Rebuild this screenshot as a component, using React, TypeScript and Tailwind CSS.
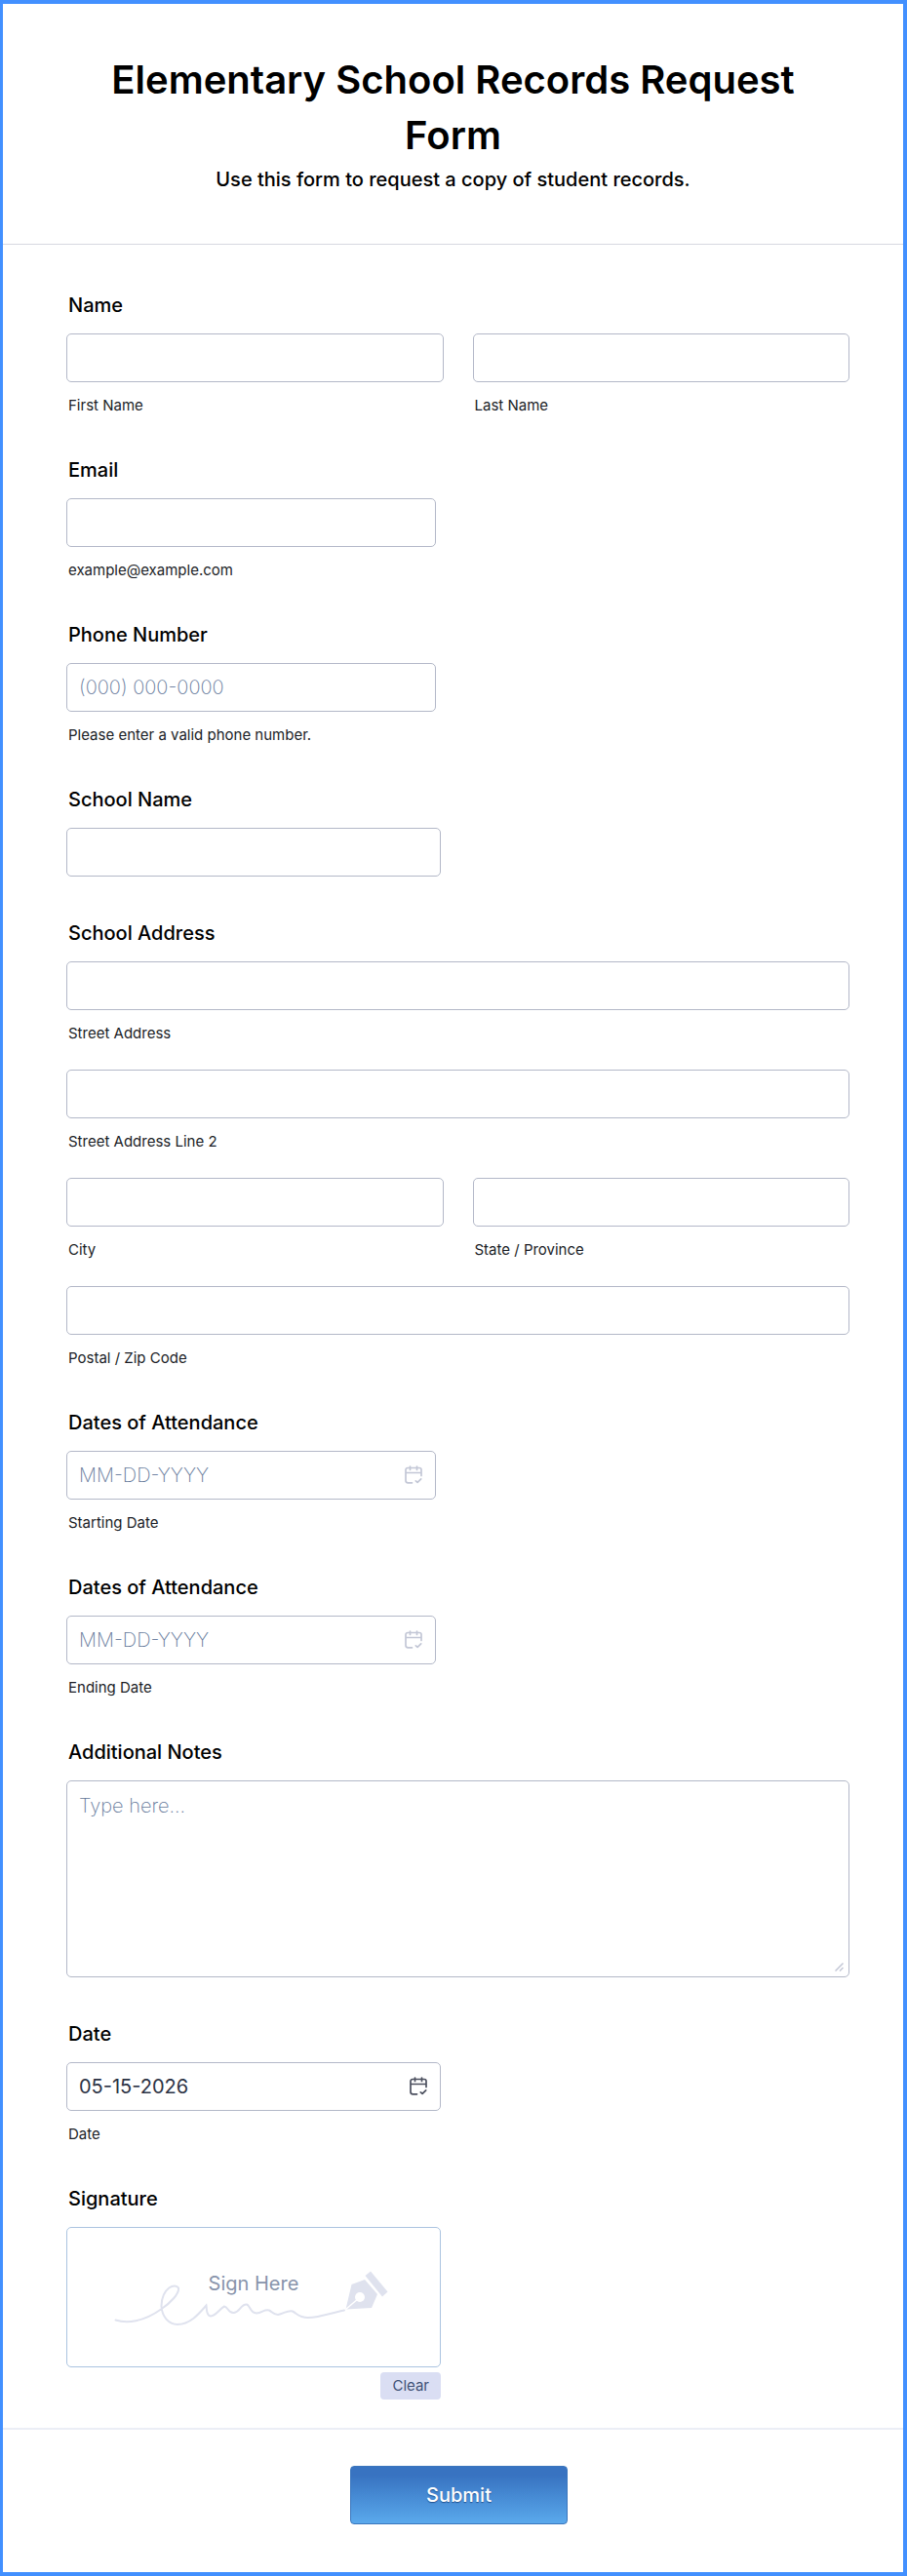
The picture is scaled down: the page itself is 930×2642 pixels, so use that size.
import type { ReactNode } from "react";

type fieldProps = {
  id: string;
  label: string;
  type?: string;
  placeholder?: string;
  sublabel?: string;
  width?: string;
}

const inputStyle = "block h-[50px] w-full rounded-[5px] border border-[#b3b8c8] bg-white px-3 text-xl text-[#2c3345] placeholder:font-extralight placeholder:text-[#64789a]";

function Title({ id, children }: { id?: string; children: ReactNode }) {
  return (
    <label htmlFor={id} className="mb-4 ml-0.5 block text-xl leading-[26px] font-medium">{children}</label>
  )
}

function Sublabel({ id, children }: { id: string; children: ReactNode }) {
  return (
    <label htmlFor={id} className="mt-[15px] ml-0.5 block text-[15px] leading-[17px] text-[#1a1d26]">{children}</label>
  )
}

function SubField({ id, sublabel }: { id: string; sublabel: string }) {
  return (
    <div className="flex-1">
      <input id={id} name={id} type="text" className={inputStyle} />
      <Sublabel id={id}>{sublabel}</Sublabel>
    </div>
  )
}

function Field({ id, label, type = "text", placeholder, sublabel, width = "w-[379px]" }: fieldProps) {
  return (
    <div className={width}>
      <Title id={id}>{label}</Title>
      <input id={id} name={id} type={type} placeholder={placeholder} className={inputStyle} />
      {sublabel && <Sublabel id={id}>{sublabel}</Sublabel>}
    </div>
  )
}

function CalendarIcon() {
  return (
    <svg viewBox="0 0 18 19" width="18" height="19" fill="none" stroke="currentColor" strokeWidth="1.7" strokeLinecap="round" strokeLinejoin="round">
      <path d="M5.5 1v3.5M12.5 1v3.5M1 7.5h16M17 10.5V4.500a2 2 0 0 0-2-2H3a2 2 0 0 0-2 2V15.500a2.300 2.300 0 0 0 2.300 2.300H7.500M11.300 15.800l1.800 1.600 3.600-3.600" />
    </svg>
  )
}

function DateField({ id, label, sublabel, value, width = "w-[379px]" }: { id: string; label: string; sublabel: string; value?: string; width?: string }) {
  return (
    <div className={width}>
      <Title id={id}>{label}</Title>
      <div className="relative">
        <input id={id} name={id} type="text" placeholder="MM-DD-YYYY" defaultValue={value} className={inputStyle} />
        <button type="button" aria-label="Choose date" className={`absolute top-[15px] right-3.5 ${value ? "text-[#4b4f5e]" : "text-[#c3c7d6]"}`}>
          <CalendarIcon />
        </button>
      </div>
      <Sublabel id={id}>{sublabel}</Sublabel>
    </div>
  )
}

function SignatureDrawing() {
  return (
    <svg viewBox="0 0 320 90" width="320" height="90" fill="none" className="absolute top-[25px] left-[31px]">
      <path d="M18.500 69.500C30 73 47 71.500 65 58.500C76 51 84 42 83 36.500C80 31 66 36 65.500 55C66 66 73 74 82 74C95 74 104 63 111.500 54.500C112 57 111 65 116 65.500C122 65 125 58 130 55.500C134 56 134 63 140 62C146 61 147 53 153 53.500C157 55 156 62 163 62.500C169 62 171 58 176 59.500C179 61 180 64 185 64C191 63 195 59 200 60.500C205 63 206 67 216 67C228 67 240 62 253 59.500" stroke="#dfe2ee" strokeWidth="2" strokeLinecap="round" />
      <path d="M274.500 24l5.500-4.500 17.500 21-5.500 5z" fill="#dfe2ee" />
      <path d="M260.500 33l13.500-5 13 15-6 14-26.500 1.500z" fill="#dfe2ee" />
      <path d="M254.500 58.500L268 47" stroke="#fff" strokeWidth="1.500" />
      <circle cx="269" cy="46" r="5" fill="#fff" />
    </svg>
  )
}

export default function App() {
  return (
    <main className="border-4 border-l-3 border-[#4290ff] bg-white font-['Inter',sans-serif] text-black">
      <form onSubmit={(e) => e.preventDefault()}>
        <header className="border-b border-[#d7d8e1] px-16 pt-[49px] pb-[54px] text-center">
          <h1 className="text-[40px] leading-[57px] font-semibold">Elementary School Records Request Form</h1>
          <p className="mt-[5px] text-xl leading-6 font-medium">Use this form to request a copy of student records.</p>
        </header>

        <div className="flex flex-col gap-[45px] pt-[49px] pr-[55px] pb-[29px] pl-[65px]">
          <fieldset>
            <Title id="first">Name</Title>
            <div className="flex gap-[30px]">
              <SubField id="first" sublabel="First Name" />
              <SubField id="last" sublabel="Last Name" />
            </div>
          </fieldset>

          <Field id="email" label="Email" type="email" sublabel="example@example.com" />
          <Field id="phone" label="Phone Number" type="tel" placeholder="(000) 000-0000" sublabel="Please enter a valid phone number." />
          <Field id="school" label="School Name" width="w-96" />

          <fieldset>
            <Title id="street">School Address</Title>
            <div className="flex flex-col gap-[29px]">
              <SubField id="street" sublabel="Street Address" />
              <SubField id="street2" sublabel="Street Address Line 2" />
              <div className="flex gap-[30px]">
                <SubField id="city" sublabel="City" />
                <SubField id="state" sublabel="State / Province" />
              </div>
              <SubField id="zip" sublabel="Postal / Zip Code" />
            </div>
          </fieldset>

          <DateField id="start" label="Dates of Attendance" sublabel="Starting Date" />
          <DateField id="end" label="Dates of Attendance" sublabel="Ending Date" />

          <div>
            <Title id="notes">Additional Notes</Title>
            <div className="relative">
              <textarea id="notes" name="notes" placeholder="Type here..." className="block h-[202px] w-full resize-none rounded-[5px] border border-[#b3b8c8] px-3 py-[11px] text-xl leading-7 placeholder:font-extralight placeholder:text-[#64789a]" />
              <svg viewBox="0 0 9 9" width="9" height="9" stroke="#c3c7d6" strokeWidth="1.500" className="absolute right-1.5 bottom-1.5">
                <path d="M0.500 8.500l8-8M5 8.500L8.500 5" />
              </svg>
            </div>
          </div>

          <DateField id="date" label="Date" sublabel="Date" value="05-15-2026" width="w-96" />

          <div className="flex w-96 flex-col">
            <h2 className="mb-4 ml-0.5 text-xl leading-[26px] font-medium">Signature</h2>
            <div className="relative h-36 rounded-[5px] border border-[#abc4e0]">
              <SignatureDrawing />
              <p className="relative pt-[45px] text-center text-xl leading-6 text-[#8894ab]">Sign Here</p>
            </div>
            <button type="button" className="mt-[5px] h-7 self-end rounded bg-[#dadef3] px-3 text-[15px] text-[#3f5176]">Clear</button>
          </div>
        </div>

        <footer className="flex justify-center border-t-2 border-[#ebeef6] pt-[37px] pb-[49px] pl-3">
          <button type="submit" className="h-[60px] w-[223px] rounded border border-[#3a76bd] bg-linear-to-b from-[#3873c1] from-15% to-[#5aa9ec] text-xl font-medium text-white text-shadow-[0_1px_1px_#20508f]">Submit</button>
        </footer>
      </form>
    </main>
  )
}
